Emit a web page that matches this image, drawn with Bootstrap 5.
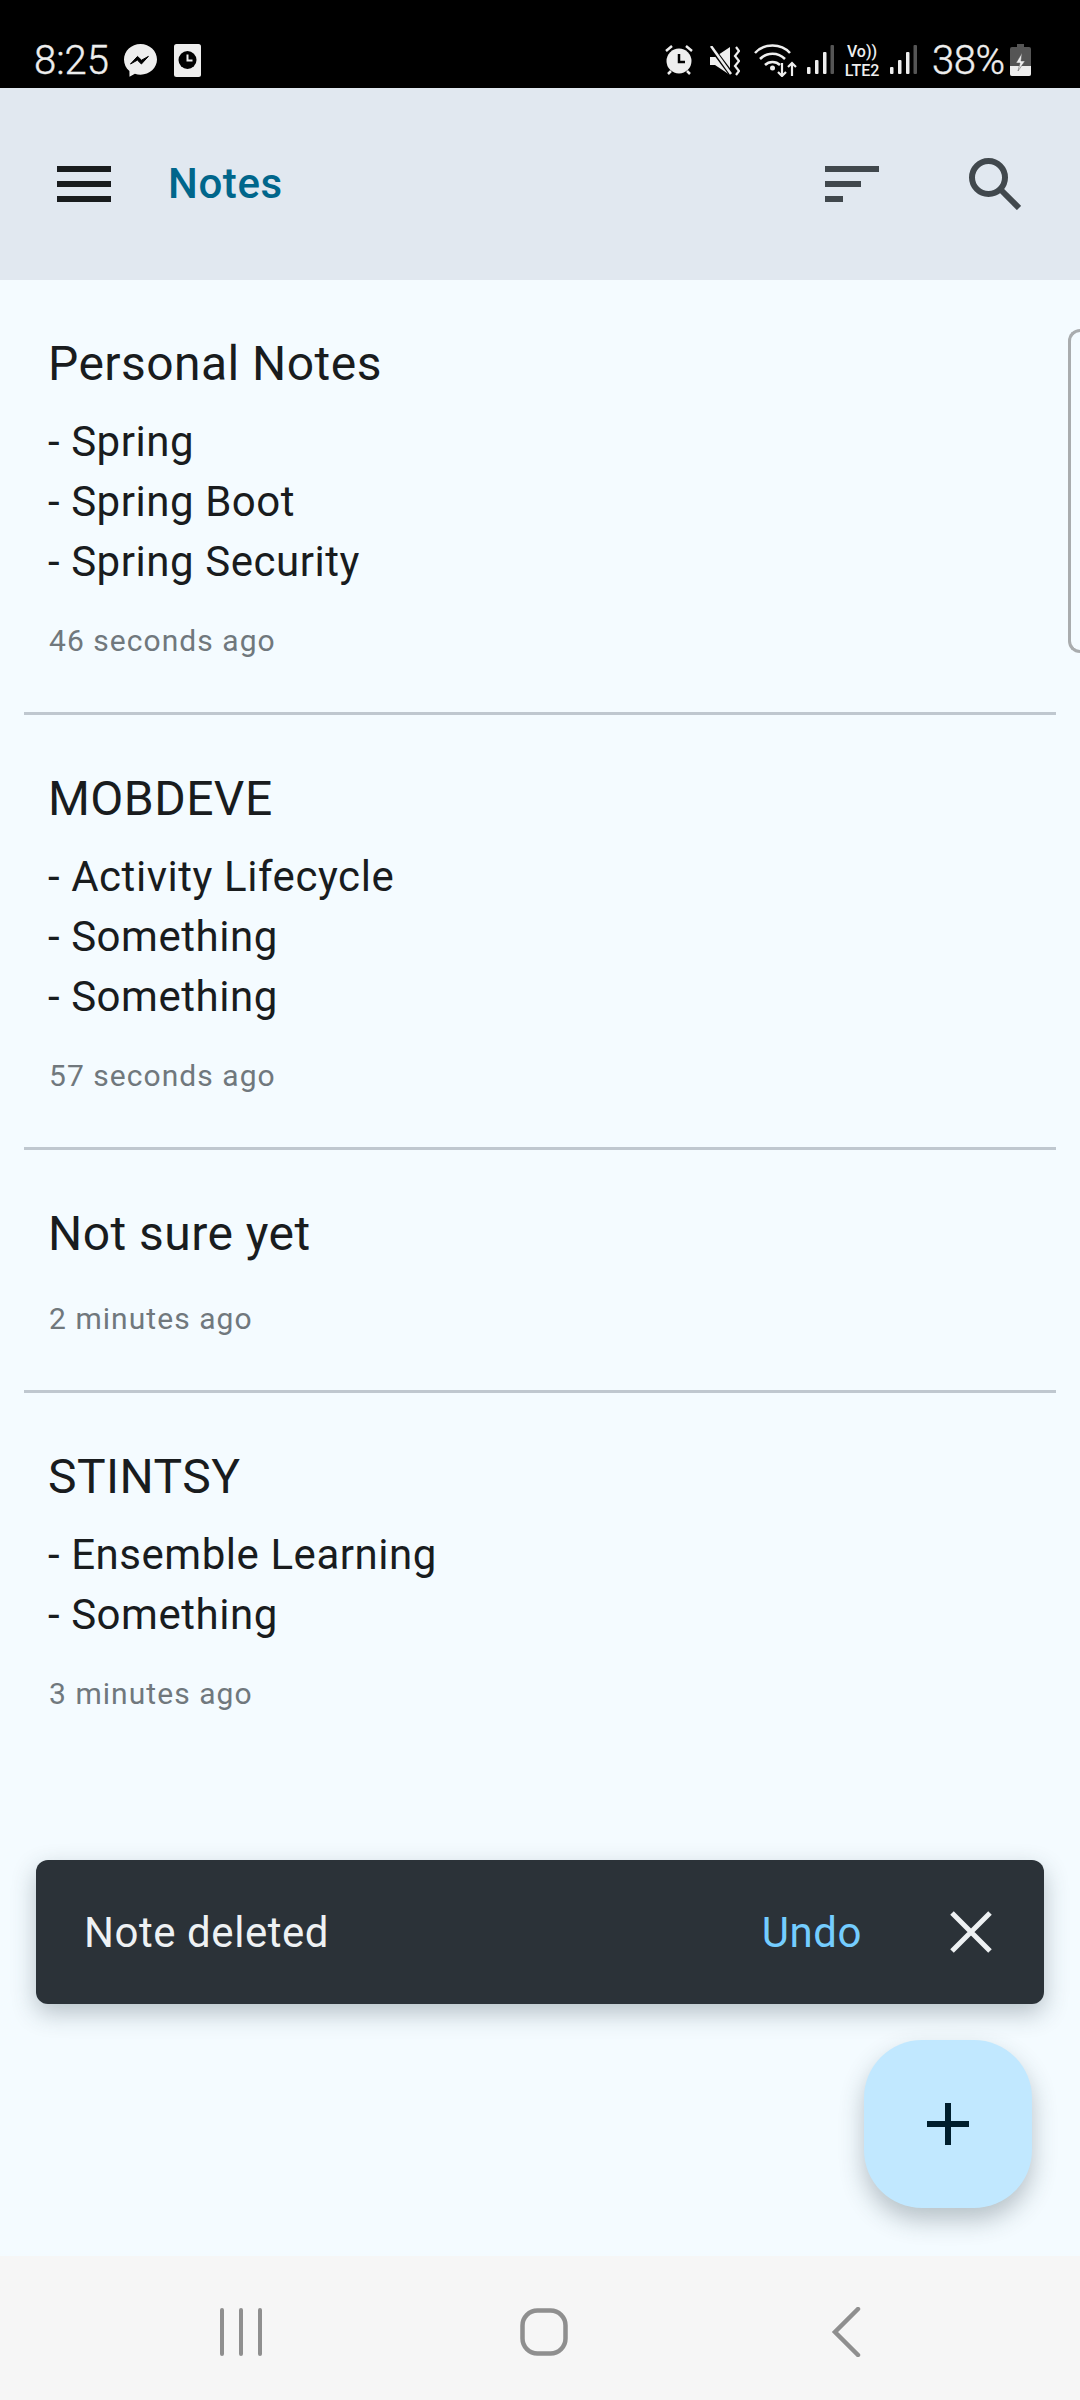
<!DOCTYPE html>
<html lang="en">
  <head>
    <meta charset="UTF-8" />
    <title>Notes</title>
    <meta name="viewport" content="width=device-width, initial-scale=1" />
    <link
      href="https://cdn.jsdelivr.net/npm/bootstrap@5.3.3/dist/css/bootstrap.min.css"
      rel="stylesheet"
    />
    <style>
      body {
        width: 1080px;
        height: 2400px;
        overflow: hidden;
        background: #f4fbff;
        font-family: Roboto, "Liberation Sans", sans-serif;
        color: #191c1e;
      }
      .status-strip {
        height: 88px;
        background: #000;
        color: #eee;
        padding: 0 49px 0 34px;
      }
      .status-strip svg {
        display: block;
        flex: none;
      }
      .clock-text {
        font-size: 40px;
        font-weight: 300;
        line-height: 40px;
        margin-top: 41px;
        width: 90px;
        -webkit-text-stroke: 0.4px #eee;
      }
      .pct-text {
        font-size: 40px;
        font-weight: 300;
        line-height: 40px;
        margin-top: 41px;
        width: 70px;
        white-space: nowrap;
        letter-spacing: -0.4px;
        -webkit-text-stroke: 0.4px #eee;
      }
      .lte-text {
        font-weight: 500;
        margin-top: 42px;
        width: 40px;
        text-align: center;
        white-space: nowrap;
      }
      .lte-text div {
        font-size: 16px;
        line-height: 19px;
        height: 19px;
      }
      .top-bar {
        height: 192px;
        background: #e1e8f0;
        padding: 0 59px 0 57px;
      }
      .top-title {
        font-size: 42px;
        font-weight: 500;
        line-height: 60px;
        letter-spacing: 0.6px;
        color: #00668b;
        margin-left: 57px;
      }
      .notes-area {
        min-height: 0;
      }
      .notes-list > .note-row {
        background: transparent;
        border-width: 0 0 3px;
        border-style: solid;
        border-color: #bfc7cf;
        margin: 0 24px;
        padding: 48px 24px 47px;
        color: #191c1e;
      }
      .notes-list > .note-row:last-child {
        border-bottom-width: 0;
      }
      .note-title {
        font-size: 48px;
        line-height: 72px;
        letter-spacing: 0.45px;
        margin: 0 0 12px;
        font-weight: 400;
      }
      .note-body {
        font-size: 42px;
        line-height: 60px;
        letter-spacing: 0.55px;
        white-space: pre-line;
      }
      .note-time {
        font-size: 30px;
        line-height: 48px;
        letter-spacing: 1.05px;
        color: #70787d;
        margin: 25px 0 0 1px;
      }
      .side-handle {
        position: absolute;
        top: 49px;
        right: 0;
        width: 12px;
        height: 324px;
        border: 3px solid #a9acae;
        border-right: 0;
        border-radius: 15px 0 0 15px;
      }
      .snack-bar {
        position: absolute;
        left: 36px;
        right: 36px;
        top: 1580px;
        height: 144px;
        background: #2b3238;
        color: #eef1f3;
        border-radius: 12px;
        padding: 0 52px 0 48px;
        font-size: 42px;
        letter-spacing: 0.55px;
        box-shadow: 0 9px 24px rgba(40, 60, 70, 0.3);
      }
      .snack-undo {
        color: #74cdff;
        margin-right: 88px;
      }
      .add-fab {
        position: absolute;
        left: 864px;
        top: 1760px;
        width: 168px;
        height: 168px;
        border-radius: 58px;
        background: #c1e8ff;
        border: 0;
        box-shadow: 0 12px 24px rgba(40, 60, 70, 0.3);
      }
      .soft-keys {
        height: 144px;
        background: #f6f6f6;
        padding-top: 8px;
      }
    </style>
  </head>
  <body class="d-flex flex-column">
    <div class="status-strip d-flex flex-shrink-0">
      <div class="clock-text">8:25</div>
      <svg width="33" height="33" viewBox="0 0 33 33" style="margin-top: 44px">
        <path d="M16.500 0C7.400 0 0 6.900 0 15.600c0 4.600 2 8.700 5.400 11.500l.1 5.600 5.400-2.900c1.800.6 3.700.9 5.600.9 9.100 0 16.500-6.900 16.500-15.100C33 6.900 25.600 0 16.500 0z" fill="#eee" />
        <path d="M6.500 20l7-7.600 4 3.800 6.900-3.800-7 7.600-4-3.900z" fill="#000" stroke="#000" stroke-width="1" />
      </svg>
      <svg width="27" height="33" viewBox="0 0 27 33" style="margin: 44px 0 0 17px">
        <rect width="27" height="33" rx="2.500" fill="#eee" />
        <circle cx="13.500" cy="16" r="9" fill="#000" />
        <path d="M13.500 10.500V16.500H18.500" stroke="#eee" stroke-width="2" fill="none" />
      </svg>
      <div class="d-flex ms-auto">
        <svg width="30" height="30" viewBox="0 0 30 30" style="margin-top: 45px">
          <circle cx="15" cy="16" r="12.500" fill="#eee" />
          <path d="M15 9v8h6" stroke="#000" stroke-width="2.500" fill="none" />
          <path d="M2 6l6-5M28 6l-6-5M4 29l3-3M26 29l-3-3" stroke="#eee" stroke-width="2.500" />
        </svg>
        <svg width="30" height="30" viewBox="0 0 30 30" style="margin: 46px 0 0 16px">
          <path d="M0 11h5L20 1v28L5 19H0z" fill="#eee" />
          <path d="M1 1l21 28" stroke="#000" stroke-width="5" />
          <path d="M1 0l20 28" stroke="#eee" stroke-width="2.500" />
          <path d="M26 1l3 4-4 5 4 5-4 5 4 5-3 4" stroke="#eee" stroke-width="2.200" fill="none" />
        </svg>
        <svg width="44" height="34" viewBox="0 0 44 34" style="margin: 43px 0 0 14px">
          <path d="M1 10C10 0 27 0 36 10M6 16c7-7 18-7 25 0M11 22c4-4 11-4 15 0" stroke="#eee" stroke-width="2.500" fill="none" />
          <circle cx="18.500" cy="25" r="2.500" fill="#eee" />
          <path d="M28 20v13M24 29l4 4 4-4M38 33V20M34 24l4-4 4 4" stroke="#eee" stroke-width="2.200" fill="none" />
        </svg>
        <svg width="27" height="30" viewBox="0 0 27 30" style="margin: 45px 0 0 9px">
          <rect x="0" y="22" width="3.500" height="7" rx="1" fill="#eee" />
          <rect x="8" y="15" width="3.500" height="14" rx="1" fill="#eee" />
          <rect x="16" y="7" width="3.500" height="22" rx="1" fill="#eee" />
          <rect x="23.500" y="0" width="3.500" height="29" rx="1" fill="#555" />
        </svg>
        <div class="lte-text" style="margin-left: 8px"><div>Vo))</div><div>LTE2</div></div>
        <svg width="27" height="30" viewBox="0 0 27 30" style="margin: 45px 0 0 8px">
          <rect x="0" y="22" width="3.500" height="7" rx="1" fill="#eee" />
          <rect x="8" y="15" width="3.500" height="14" rx="1" fill="#eee" />
          <rect x="16" y="7" width="3.500" height="22" rx="1" fill="#eee" />
          <rect x="23.500" y="0" width="3.500" height="29" rx="1" fill="#555" />
        </svg>
        <div class="pct-text" style="margin-left: 15px">38%</div>
        <svg width="21" height="32" viewBox="0 0 21 32" style="margin: 44px 0 0 8px">
          <path d="M7 0h7v3h5a2 2 0 0 1 2 2v25a2 2 0 0 1-2 2H2a2 2 0 0 1-2-2V5a2 2 0 0 1 2-2h5z" fill="#555" />
          <path d="M0 22h21v8a2 2 0 0 1-2 2H2a2 2 0 0 1-2-2z" fill="#eee" />
          <path d="M12 9l-6 10h4l-2 8 7-10h-4z" fill="#eee" stroke="#555" stroke-width="0.500" />
        </svg>
      </div>
    </div>

    <nav class="top-bar d-flex align-items-center flex-shrink-0">
      <svg width="54" height="36" viewBox="0 0 54 36">
        <path d="M0 0h54v6H0zM0 15h54v6H0zM0 30h54v6H0z" fill="#191c1e" />
      </svg>
      <div class="top-title">Notes</div>
      <svg width="54" height="36" viewBox="0 0 54 36" class="ms-auto">
        <path d="M0 0h54v6H0zM0 15h36v6H0zM0 30h18v6H0z" fill="#41484d" />
      </svg>
      <svg width="52" height="52" viewBox="0 0 52 52" style="margin-left: 90px">
        <circle cx="19.500" cy="19.500" r="16.500" stroke="#41484d" stroke-width="6" fill="none" />
        <path d="M32 32l18 18" stroke="#41484d" stroke-width="6" fill="none" />
      </svg>
    </nav>

    <main class="notes-area flex-grow-1 position-relative">
      <div class="list-group list-group-flush notes-list">
        <div class="list-group-item note-row">
          <h5 class="note-title">Personal Notes</h5>
          <div class="note-body">- Spring
- Spring Boot
- Spring Security</div>
          <div class="note-time">46 seconds ago</div>
        </div>
        <div class="list-group-item note-row">
          <h5 class="note-title">MOBDEVE</h5>
          <div class="note-body">- Activity Lifecycle
- Something
- Something</div>
          <div class="note-time">57 seconds ago</div>
        </div>
        <div class="list-group-item note-row">
          <h5 class="note-title mb-0">Not sure yet</h5>
          <div class="note-time">2 minutes ago</div>
        </div>
        <div class="list-group-item note-row">
          <h5 class="note-title">STINTSY</h5>
          <div class="note-body">- Ensemble Learning
- Something</div>
          <div class="note-time">3 minutes ago</div>
        </div>
      </div>

      <div class="side-handle"></div>

      <div class="snack-bar d-flex align-items-center">
        <span class="flex-grow-1">Note deleted</span>
        <span class="snack-undo">Undo</span>
        <svg width="42" height="42" viewBox="0 0 42 42">
          <path d="M2 2l38 38M40 2L2 40" stroke="#eef1f3" stroke-width="5" fill="none" />
        </svg>
      </div>

      <button class="add-fab d-flex align-items-center justify-content-center" type="button" aria-label="Add">
        <svg width="42" height="42" viewBox="0 0 42 42">
          <path d="M18 0h6v18h18v6H24v18h-6V24H0v-6h18z" fill="#001e2d" />
        </svg>
      </button>
    </main>

    <div class="soft-keys d-flex align-items-center flex-shrink-0">
      <svg width="44" height="48" viewBox="0 0 44 48" style="margin-left: 219px">
        <path d="M3 2v44M22 2v44M41 2v44" stroke="#8f8f8f" stroke-width="4" stroke-linecap="round" fill="none" />
      </svg>
      <svg width="48" height="48" viewBox="0 0 48 48" style="margin-left: 257px">
        <rect x="2.500" y="2.500" width="43" height="43" rx="15" stroke="#8f8f8f" stroke-width="4.500" fill="none" />
      </svg>
      <svg width="30" height="50" viewBox="0 0 30 50" style="margin-left: 263px">
        <path d="M27 2L4 25l23 23" stroke="#8f8f8f" stroke-width="4.500" stroke-linecap="round" fill="none" />
      </svg>
    </div>
  </body>
</html>
